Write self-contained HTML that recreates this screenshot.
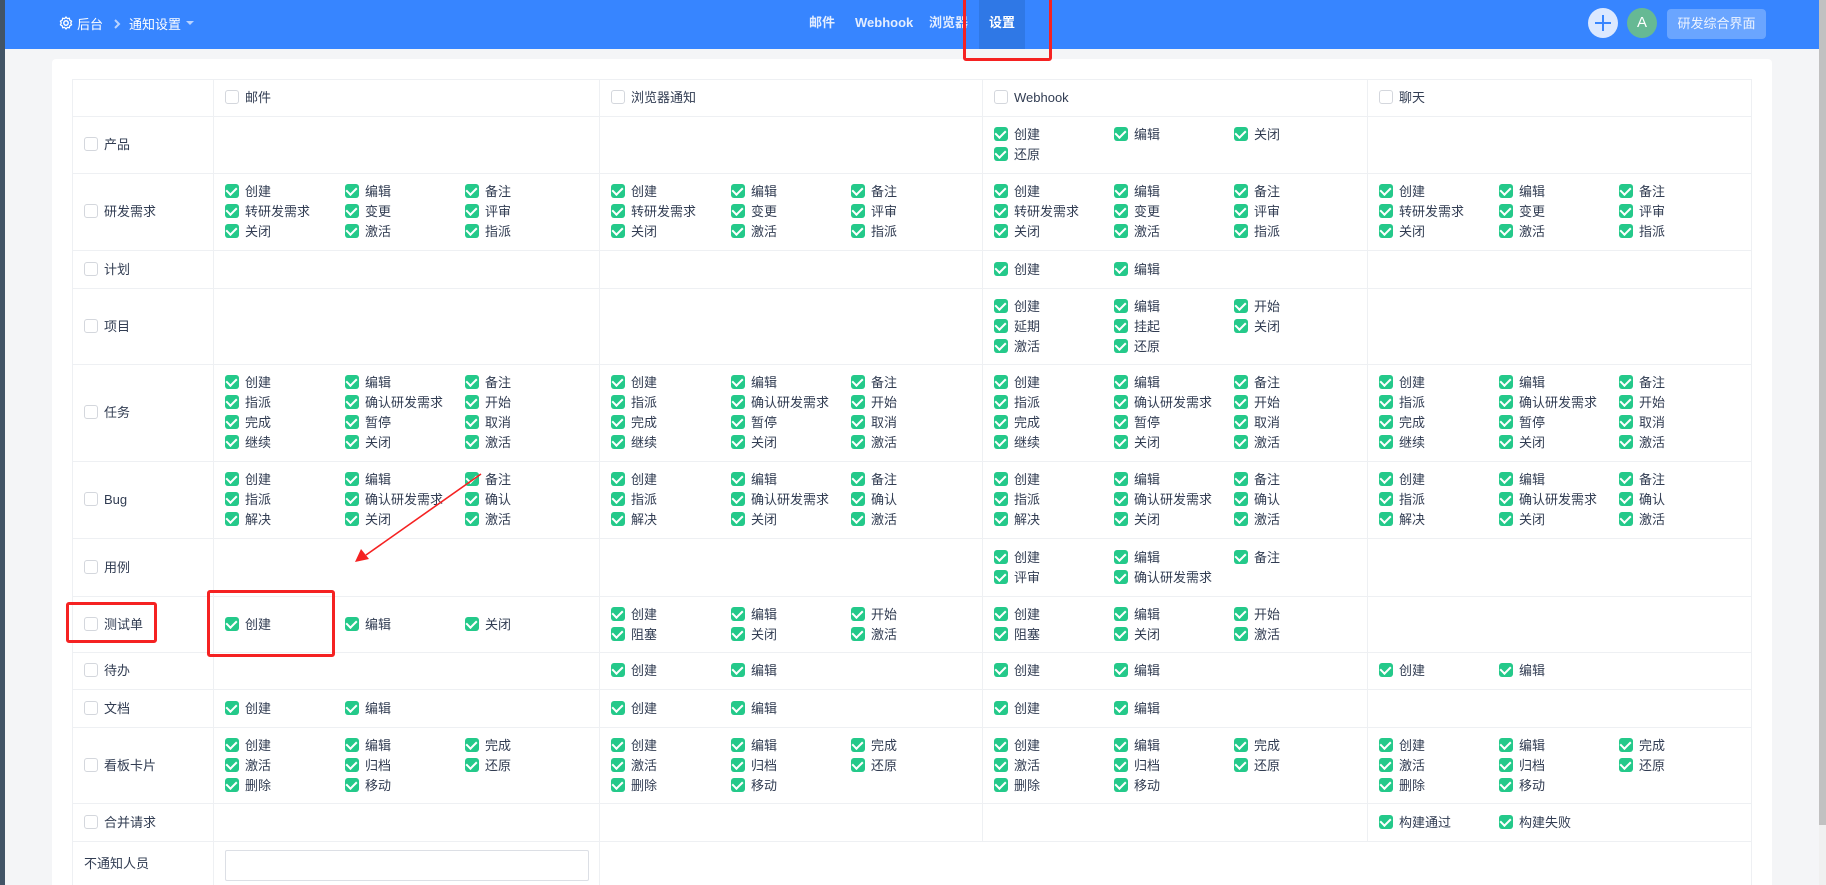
<!DOCTYPE html>
<html><head><meta charset="utf-8"><style>
*{box-sizing:border-box;margin:0;padding:0}
html,body{width:1826px;height:885px;overflow:hidden}
body{background:#f4f5f7;font-family:"Liberation Sans","Noto Sans CJK SC",sans-serif;font-size:13px;color:#313c52;position:relative}
.strip{position:absolute;left:0;top:0;width:5px;height:885px;background:#425466}
.hdr{position:absolute;left:5px;top:0;right:7px;height:49px;background:#3785ff;color:#fff}
.sb{position:absolute;right:0;top:0;width:7px;height:885px;background:#f0f0f0}
.sb i{position:absolute;left:0;top:0;width:7px;height:825px;background:#c1c1c1}
.card{position:absolute;left:52px;top:59px;width:1720px;height:840px;background:#fff;border-radius:4px}
table{position:absolute;left:72px;top:79px;border-collapse:collapse;table-layout:fixed}
td{border:1px solid #eef0f3;vertical-align:middle;padding:0 0 0 11px;line-height:20px}
.it{display:inline-block;width:120px;white-space:nowrap;height:20px;vertical-align:top}
.cb{display:inline-block;width:14px;height:14px;border-radius:3px;vertical-align:-2px;margin-right:6px;position:relative}
.on{background:#24c98a}
.on:after{content:"";position:absolute;left:3px;top:1px;width:5px;height:8px;border:solid #fff;border-width:0 2px 2px 0;transform:rotate(45deg)}
.off{border:1px solid #d4d7dd;background:#fff}
.nav{position:absolute;top:0;height:49px;line-height:46px;font-weight:bold;font-size:13px;color:#e3edff}
.red{position:absolute;border:3px solid #f52222;border-radius:3px}
</style></head><body>
<div class="strip"></div>
<div class="hdr">
 <svg style="position:absolute;left:54px;top:16px" width="14" height="14" viewBox="0 0 14 14"><circle cx="7" cy="7" r="2.2" fill="none" stroke="#fff" stroke-width="1.5"/><path d="M7 1l1.3 1.6 2-.4.5 2 1.8 1-.9 1.8.9 1.8-1.8 1-.5 2-2-.4L7 13l-1.3-1.6-2 .4-.5-2-1.8-1 .9-1.8-.9-1.8 1.8-1 .5-2 2 .4z" fill="none" stroke="#fff" stroke-width="1.3" stroke-linejoin="round"/></svg>
 <span style="position:absolute;left:72px;top:14px;font-size:13px">后台</span>
 <svg style="position:absolute;left:108px;top:18px" width="8" height="12" viewBox="0 0 8 12"><path d="M2 2l4 4-4 4" fill="none" stroke="#b9d3ff" stroke-width="2"/></svg>
 <span style="position:absolute;left:124px;top:14px;font-size:13px">通知设置</span>
 <span style="position:absolute;left:181px;top:21px;border:4px solid transparent;border-top:4px solid #b9d3ff"></span>
 <div style="position:absolute;left:974px;top:0;width:46px;height:49px;background:#2f78e6"></div>
 <span class="nav" style="left:804px">邮件</span>
 <span class="nav" style="left:850px">Webhook</span>
 <span class="nav" style="left:924px">浏览器</span>
 <span class="nav" style="left:984px;color:#fff">设置</span>
 <div style="position:absolute;left:1583px;top:8px;width:30px;height:30px;border-radius:50%;background:#dbe8ff"></div>
 <div style="position:absolute;left:1590px;top:22px;width:16px;height:2px;background:#3785ff"></div>
 <div style="position:absolute;left:1597px;top:15px;width:2px;height:16px;background:#3785ff"></div>
 <div style="position:absolute;left:1622px;top:8px;width:30px;height:30px;border-radius:50%;background:#66b994;text-align:center;line-height:30px;font-size:15px">A</div>
 <div style="position:absolute;left:1662px;top:9px;width:99px;height:30px;border-radius:4px;background:#6aa5ff;text-align:center;line-height:30px;font-size:13px;color:#eef4ff">研发综合界面</div>
</div>
<div class="sb"><i></i></div>
<div class="card"></div>
<table>
<colgroup><col style="width:141px"><col style="width:386px"><col style="width:383px"><col style="width:385px"><col style="width:384px"></colgroup>
<tbody id="tb"></tbody>
</table>
<div class="red" style="left:963px;top:-3px;width:89px;height:64px"></div>
<div class="red" style="left:66px;top:602px;width:91px;height:41px"></div>
<div class="red" style="left:207px;top:590px;width:128px;height:67px"></div>
<svg style="position:absolute;left:0;top:0" width="1826" height="885"><line x1="481" y1="474" x2="366" y2="555" stroke="#f52222" stroke-width="1.6"/><path d="M355 562l6-13 8 10z" fill="#f52222"/></svg>
<script>
var A=["创建","编辑","备注","转研发需求","变更","评审","关闭","激活","指派"];
var T=["创建","编辑","备注","指派","确认研发需求","开始","完成","暂停","取消","继续","关闭","激活"];
var B=["创建","编辑","备注","指派","确认研发需求","确认","解决","关闭","激活"];
var K=["创建","编辑","完成","激活","归档","还原","删除","移动"];
var S=["创建","编辑","开始","阻塞","关闭","激活"],E=["创建","编辑"];
var rows=[
["产品",57,[[],[],["创建","编辑","关闭","还原"],[]]],
["研发需求",77,[A,A,A,A]],
["计划",38,[[],[],E,[]]],
["项目",76,[[],[],["创建","编辑","开始","延期","挂起","关闭","激活","还原"],[]]],
["任务",97,[T,T,T,T]],
["Bug",77,[B,B,B,B]],
["用例",58,[[],[],["创建","编辑","备注","评审","确认研发需求"],[]]],
["测试单",56,[["创建","编辑","关闭"],S,S,[]]],
["待办",37,[[],E,E,E]],
["文档",38,[E,E,E,[]]],
["看板卡片",76,[K,K,K,K]],
["合并请求",38,[[],[],[],["构建通过","构建失败"]]]];
var h='<tr style="height:37px"><td></td>';
["邮件","浏览器通知","Webhook","聊天"].forEach(function(n){h+='<td><span class="cb off"></span>'+n+'</td>'});
h+='</tr>';
rows.forEach(function(r){h+='<tr style="height:'+r[1]+'px"><td><span class="cb off"></span>'+r[0]+'</td>';
r[2].forEach(function(c){h+='<td>';c.forEach(function(x){h+='<span class="it"><span class="cb on"></span>'+x+'</span>'});h+='</td>'});h+='</tr>'});
h+='<tr style="height:50px"><td style="vertical-align:top;padding-top:12px">不通知人员</td><td style="vertical-align:top;padding-top:8px"><div style="width:364px;height:31px;border:1px solid #dcdfe5;border-radius:2px"></div></td><td colspan="3"></td></tr>';
document.getElementById("tb").innerHTML=h;
</script>
</body></html>
